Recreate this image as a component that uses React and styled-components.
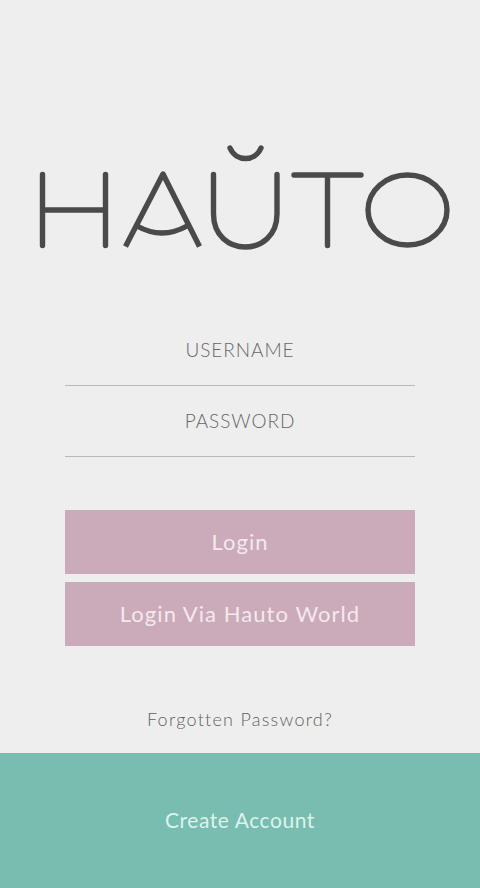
import React from 'react';
import styled, { createGlobalStyle } from 'styled-components';

const GlobalStyle = createGlobalStyle`
  html, body {
    margin: 0;
    padding: 0;
    background: #efeeee;
  }

  * {
    box-sizing: border-box;
  }
`;

const Page = styled.main`
  display: flex;
  flex-direction: column;
  width: 480px;
  height: 888px;
  overflow: hidden;
  background: #efeeee;
  font-family: Lato, "Liberation Sans", sans-serif;
`;

const LogoBox = styled.div`
  height: 315px;
  padding-top: 140px;
`;

const LogoSvg = styled.svg`
  display: block;
  width: 480px;
  height: 115px;
`;

const Form = styled.form`
  display: flex;
  flex-direction: column;
  margin: 0 65px;
`;

const Field = styled.div`
  display: flex;
  align-items: center;
  justify-content: center;
  height: 71px;
  padding-bottom: 2px;
  border-bottom: 1px solid #b9b9b9;
  color: #666666;
  font-size: 19px;
  font-weight: 300;
  letter-spacing: 0.95px;
`;

const Buttons = styled.div`
  display: flex;
  flex-direction: column;
  gap: 8px;
  margin-top: 53px;
`;

const Button = styled.button`
  height: 64px;
  border: 0;
  padding: 0 0 2px;
  background: #cbabb9;
  color: #f5e8ef;
  font-family: inherit;
  font-size: 22px;
  letter-spacing: 1.05px;
`;

const Forgot = styled.a`
  display: block;
  margin-top: 62px;
  height: 22px;
  line-height: 22px;
  text-align: center;
  color: #5f5f5f;
  font-size: 18px;
  font-weight: 300;
  letter-spacing: 1.25px;
`;

const Footer = styled.footer`
  display: flex;
  align-items: center;
  justify-content: center;
  flex: 1;
  margin-top: 23px;
  padding-bottom: 2px;
  background: #79bcb0;
  color: #dcf3ee;
  font-size: 21px;
  letter-spacing: 0.55px;
`;

function Logo() {
  return (
    <LogoSvg viewBox="0 140 480 115" aria-label="Hauto">
      <g fill="none" stroke="#4a4a4a" strokeWidth="5.4" strokeLinecap="round" strokeLinejoin="round">
        <path d="M42.5 174.5V245.5M105.5 174.5V245.5M42.5 210H105.5" />
        <path d="M125.5 246.5L163 174L199.5 246.5" strokeLinecap="butt" />
        <path d="M137 226Q162 240 187 226" />
        <path d="M213.5 174.5V214C213.5 258 277 258 277 214V174.5" />
        <path d="M230 148C236 162 255 162 261 148" />
        <path d="M294 175H361M327.5 175V245.5" />
        <ellipse cx="407.5" cy="210" rx="39.5" ry="35" />
      </g>
    </LogoSvg>
  );
}

export default function App() {
  return (
    <>
      <GlobalStyle />
      <Page>
        <LogoBox>
          <Logo />
        </LogoBox>
        <Form>
          <Field>USERNAME</Field>
          <Field>PASSWORD</Field>
          <Buttons>
            <Button type="button">Login</Button>
            <Button type="button">Login Via Hauto World</Button>
          </Buttons>
        </Form>
        <Forgot>Forgotten Password?</Forgot>
        <Footer>Create Account</Footer>
      </Page>
    </>
  );
}
